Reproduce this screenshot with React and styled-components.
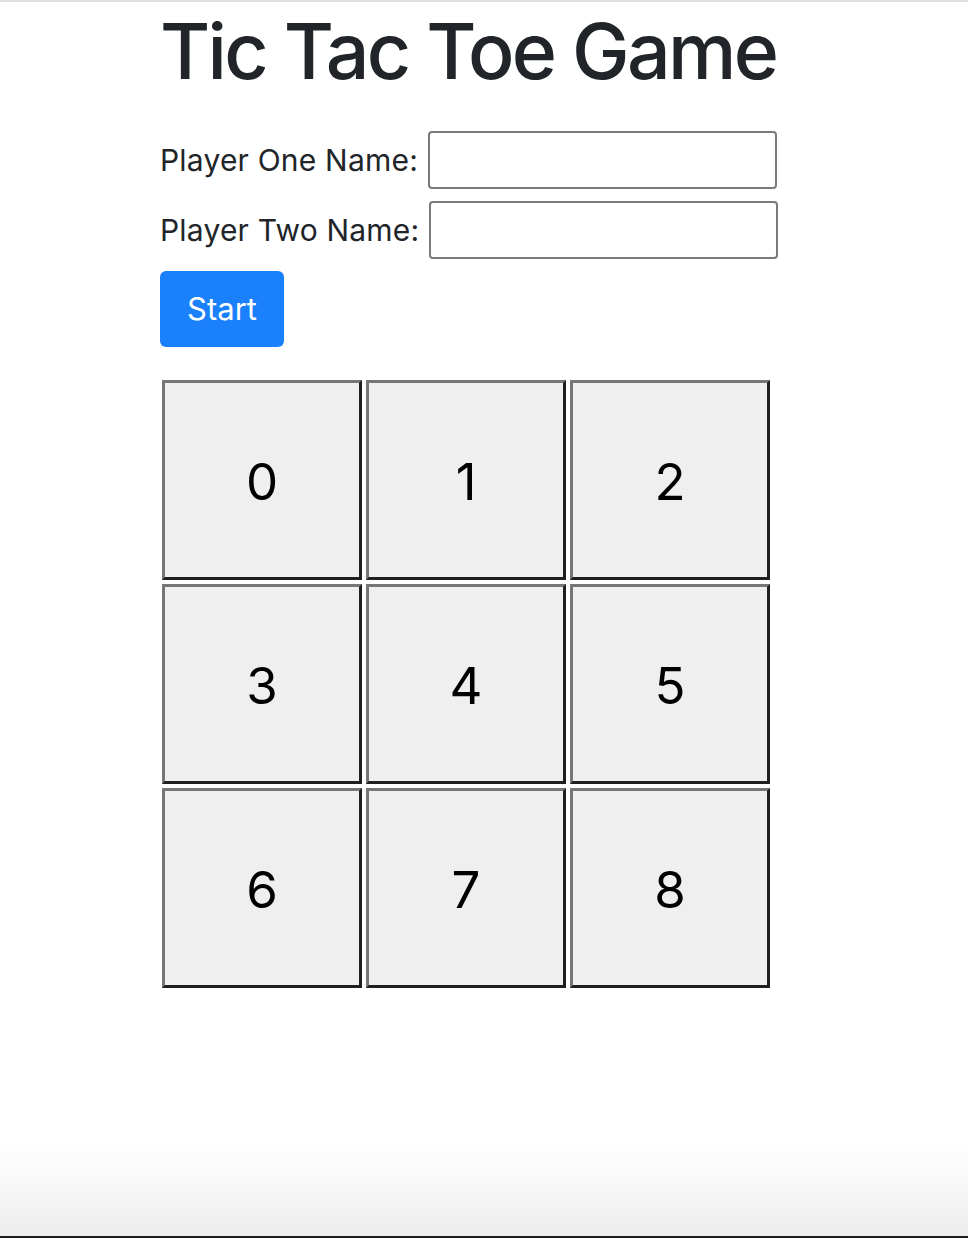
import styled, { createGlobalStyle } from "styled-components";

const GlobalStyle = createGlobalStyle`
  html, body {
    margin: 0;
    padding: 0;
    background: #fff;
  }
  body {
    font-family: Inter, "Liberation Sans", sans-serif;
    color: #212529;
    border-top: 2px solid #e1e1e3;
    min-height: 1236px;
    box-sizing: border-box;
  }
`;

const Page = styled.div`
  padding: 0 0 0 160px;
`;

const Title = styled.h1`
  margin: 7px 0 37px;
  font-size: 77px;
  font-weight: 500;
  line-height: 1.1;
  letter-spacing: -2.7px;
`;

const Form = styled.form`
  display: flex;
  flex-direction: column;
  align-items: flex-start;
  gap: 12px;
`;

const Row = styled.label`
  display: flex;
  align-items: center;
  gap: 10px;
  font-size: 30px;
  font-weight: 400;
  letter-spacing: 0.2px;
`;

const Input = styled.input`
  width: 349px;
  height: 58px;
  box-sizing: border-box;
  border: 2px solid #7a7a7a;
  border-radius: 4px;
  background: #fff;
`;

const StartButton = styled.button`
  width: 124px;
  height: 76px;
  border: none;
  border-radius: 6px;
  background: #1a80fb;
  color: #fff;
  font-family: Inter, "Liberation Sans", sans-serif;
  font-size: 31px;
  cursor: pointer;
`;

const Board = styled.div`
  display: grid;
  grid-template-columns: repeat(3, 200px);
  gap: 4px;
  margin-top: 33px;
  padding-left: 2px;
`;

const Cell = styled.button`
  width: 200px;
  height: 200px;
  box-sizing: border-box;
  border: 3px solid;
  border-color: #767676 #1f1f1f #1f1f1f #767676;
  background: #efefef;
  color: #000;
  font-family: Inter, "Liberation Sans", sans-serif;
  font-size: 51px;
  padding: 4px 0 0;
`;

const Shade = styled.div`
  position: fixed;
  left: 0;
  right: 0;
  bottom: 0;
  height: 90px;
  pointer-events: none;
  background: linear-gradient(to bottom, rgba(0, 0, 0, 0) 0%, rgba(0, 0, 0, 0.07) 96%);
  border-bottom: 2px solid #1c1c1c;
`;

export default function App() {
  return (
    <>
      <GlobalStyle />
      <Page>
        <Title>Tic Tac Toe Game</Title>
        <Form onSubmit={(e) => e.preventDefault()}>
          <Row>
            Player One Name:
            <Input type="text" />
          </Row>
          <Row>
            Player Two Name:
            <Input type="text" />
          </Row>
          <StartButton type="submit">Start</StartButton>
        </Form>
        <Board>
          {[0, 1, 2, 3, 4, 5, 6, 7, 8].map((n) => (
            <Cell key={n}>{n}</Cell>
          ))}
        </Board>
      </Page>
      <Shade />
    </>
  );
}
